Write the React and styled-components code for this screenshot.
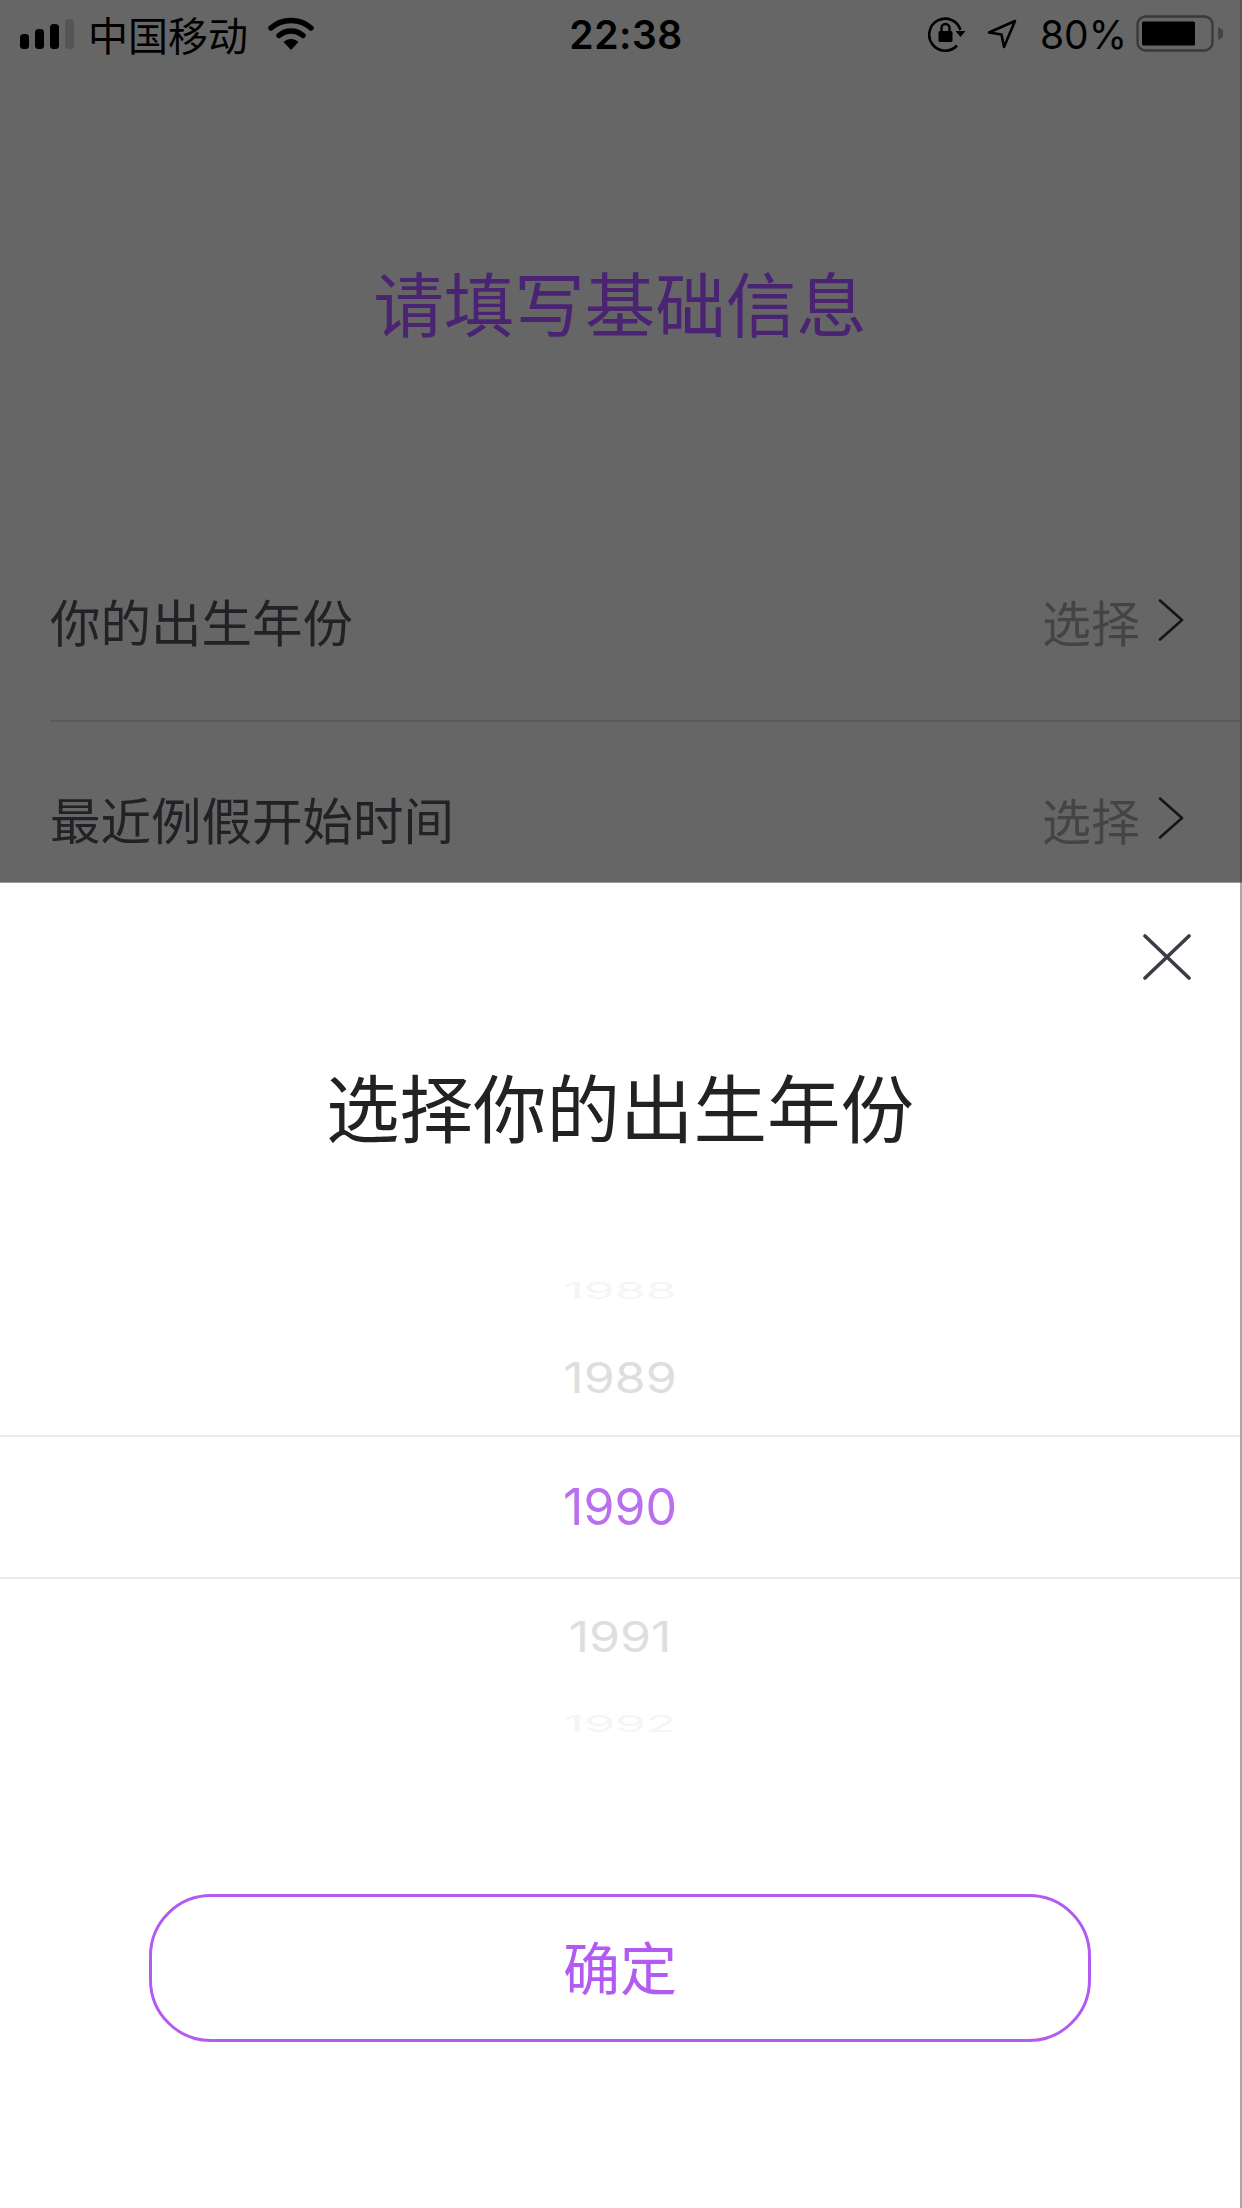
import React from 'react';
import styled, { createGlobalStyle } from 'styled-components';

const GlobalStyle = createGlobalStyle`
  html, body {
    margin: 0;
    padding: 0;
    background: #fff;
  }
`;

const FONT = `"Liberation Sans", "Noto Sans CJK SC", sans-serif`;
const PICKER_FONT = `Inter, "Liberation Sans", sans-serif`;

const years = [
  { year: 1988, height: 60, scale: 0.46, color: '#f5f5f5' },
  { year: 1989, height: 114, scale: 0.84, color: '#dedede' },
  { year: 1990, height: 144, scale: 1, color: '#b96ff0', active: true },
  { year: 1991, height: 116, scale: 0.84, color: '#dedede' },
  { year: 1992, height: 58, scale: 0.46, color: '#f5f5f5' },
];

const rows = ['你的出生年份', '最近例假开始时间'];

const App = () => (
  <Page>
    <GlobalStyle />
    <Background>
      <StatusBar>
        <StatusLeft>
          <SignalIcon />
          <Carrier>中国移动</Carrier>
          <WifiIcon />
        </StatusLeft>
        <Clock>22:38</Clock>
        <StatusRight>
          <RotationIcon />
          <LocationIcon />
          <Percent>80%</Percent>
          <BatteryIcon />
        </StatusRight>
      </StatusBar>
      <PageTitle>请填写基础信息</PageTitle>
      <FormList>
        {rows.map((label) => (
          <FormRow key={label}>
            <RowLabel>{label}</RowLabel>
            <RowValue>
              选择
              <Chevron />
            </RowValue>
          </FormRow>
        ))}
      </FormList>
    </Background>

    <Sheet>
      <CloseRow>
        <CloseIcon />
      </CloseRow>
      <SheetTitle>选择你的出生年份</SheetTitle>
      <Wheel>
        {years.map((item) => (
          <WheelItem key={item.year} $height={item.height} $active={item.active}>
            <WheelText $scale={item.scale} $color={item.color}>
              {item.year}
            </WheelText>
          </WheelItem>
        ))}
      </Wheel>
      <ConfirmButton>确定</ConfirmButton>
    </Sheet>
  </Page>
);

const SignalIcon = () => (
  <svg width="54" height="30" viewBox="0 0 54 30">
    <rect x="0" y="15" width="9" height="15" rx="3.5" fill="#000" />
    <rect x="15" y="10" width="9" height="20" rx="3.5" fill="#000" />
    <rect x="30" y="5" width="9" height="25" rx="3.5" fill="#000" />
    <rect x="45" y="0" width="9" height="30" rx="3.5" fill="#555" />
  </svg>
);

const WifiIcon = () => (
  <svg width="46" height="34" viewBox="0 0 46 34">
    <path d="M3 11 C14 1 32 1 43 11" fill="none" stroke="#000" strokeWidth="5.5" strokeLinecap="round" />
    <path d="M11 18.5 C18 12.5 28 12.5 35 18.5" fill="none" stroke="#000" strokeWidth="5.5" strokeLinecap="round" />
    <path d="M15.5 25 C20 21 26 21 30.5 25 L23 33 Z" fill="#000" />
  </svg>
);

const RotationIcon = () => (
  <svg width="38" height="36" viewBox="0 0 38 36">
    <path d="M29 29.5 A16 16 0 1 1 32.5 14" fill="none" stroke="#000" strokeWidth="2.6" />
    <path d="M27.5 15 L37.5 15 L32.5 21 Z" fill="#000" />
    <rect x="10.5" y="15" width="14" height="11" rx="1.5" fill="#000" />
    <path d="M13.5 15 V12 A4 4 0 0 1 21.5 12 V15" fill="none" stroke="#000" strokeWidth="2.4" />
  </svg>
);

const LocationIcon = () => (
  <LocationSvg width="30" height="30" viewBox="0 0 30 30">
    <path d="M28 2 L2 13.5 L14.5 15.5 L17 28 Z" fill="none" stroke="#000" strokeWidth="2.6" strokeLinejoin="round" />
  </LocationSvg>
);

const BatteryIcon = () => (
  <svg width="88" height="38" viewBox="0 0 88 38">
    <rect x="1.5" y="1.5" width="75" height="34" rx="8" fill="none" stroke="#3a3a3a" strokeWidth="2.4" />
    <rect x="6" y="6.5" width="53" height="24" rx="1.5" fill="#000" />
    <path d="M82 12 L87 15 V22 L82 25 Z" fill="#444" />
  </svg>
);

const Chevron = () => (
  <svg width="26" height="42" viewBox="0 0 26 42">
    <path d="M2 1.5 L24 21 L2 40.5" fill="none" stroke="#161616" strokeWidth="2.6" strokeLinecap="round" strokeLinejoin="round" />
  </svg>
);

const CloseIcon = () => (
  <svg width="48" height="46" viewBox="0 0 48 46">
    <path d="M2 2 L46 44 M46 2 L2 44" fill="none" stroke="#403a46" strokeWidth="3.6" strokeLinecap="round" />
  </svg>
);

// Styled Components
const Page = styled.div`
  width: 1242px;
  height: 2208px;
  display: flex;
  flex-direction: column;
  overflow: hidden;
  font-family: ${FONT};
  background: #fff;
`;

const Background = styled.div`
  height: 883px;
  flex-shrink: 0;
  overflow: hidden;
  background: #666;
  display: flex;
  flex-direction: column;
  box-sizing: border-box;
  border-bottom: 1px solid #999;
  border-right: 2px solid #555;
`;

const StatusBar = styled.div`
  height: 68px;
  flex-shrink: 0;
  display: grid;
  grid-template-columns: 1fr auto 1fr;
  align-items: center;
  padding: 0 16px 0 20px;
`;

const StatusLeft = styled.div`
  display: flex;
  align-items: center;
  gap: 14px;

  svg:last-child {
    margin-left: 6px;
  }
`;

const Carrier = styled.span`
  font-size: 40px;
  color: #000;
`;

const Clock = styled.span`
  font-family: Inter, sans-serif;
  font-size: 39px;
  font-weight: 600;
  letter-spacing: 0.5px;
  color: #000;
  margin-left: 8px;
`;

const StatusRight = styled.div`
  display: flex;
  align-items: center;
  justify-content: flex-end;
  gap: 9px;
`;

const LocationSvg = styled.svg`
  margin-left: 12px;
`;

const Percent = styled.span`
  font-family: Inter, sans-serif;
  font-size: 39px;
  color: #000;
  margin-left: 14px;
`;

const PageTitle = styled.h1`
  flex-shrink: 0;
  margin: 193px 0 0;
  font-size: 70.5px;
  line-height: 94px;
  font-weight: 400;
  color: #4b2373;
  text-align: center;
`;

const FormList = styled.div`
  flex-shrink: 0;
  margin-top: 165px;
  padding-left: 50px;
`;

const FormRow = styled.div`
  height: 192px;
  display: flex;
  align-items: center;
  justify-content: space-between;
  padding-right: 56px;
  box-sizing: border-box;

  &:first-child {
    height: 202px;
    border-bottom: 2px solid #5a5a5a;
  }
`;

const RowLabel = styled.span`
  font-size: 50.5px;
  color: #222226;
`;

const RowValue = styled.span`
  display: flex;
  align-items: center;
  gap: 18px;
  font-size: 49px;
  color: #444;
`;

const Sheet = styled.div`
  flex: 1;
  display: flex;
  flex-direction: column;
  background: #fff;
  border-right: 2px solid #a8a8a8;
`;

const CloseRow = styled.div`
  display: flex;
  justify-content: flex-end;
  padding: 51px 49px 0 0;
`;

const SheetTitle = styled.h2`
  margin: 82px 0 0;
  font-size: 73.5px;
  line-height: 100px;
  font-weight: 400;
  color: #222;
  text-align: center;
`;

const Wheel = styled.div`
  margin-top: 99px;
  display: flex;
  flex-direction: column;
`;

const WheelItem = styled.div`
  height: ${(props) => props.$height}px;
  display: flex;
  align-items: center;
  justify-content: center;
  box-sizing: border-box;
  border-style: solid;
  border-color: #ececec;
  border-width: ${(props) => (props.$active ? '2px 0' : '0')};
`;

const WheelText = styled.span`
  font-family: ${PICKER_FONT};
  font-size: 50px;
  color: ${(props) => props.$color};
  transform: scaleY(${(props) => props.$scale});
`;

const ConfirmButton = styled.button`
  align-self: center;
  width: 942px;
  height: 148px;
  margin-top: 141px;
  padding: 0 0 6px;
  box-sizing: border-box;
  border: 3px solid #b25af2;
  border-radius: 62px;
  background: #fff;
  color: #b25af2;
  font-family: ${FONT};
  font-size: 57px;
`;

export default App;
